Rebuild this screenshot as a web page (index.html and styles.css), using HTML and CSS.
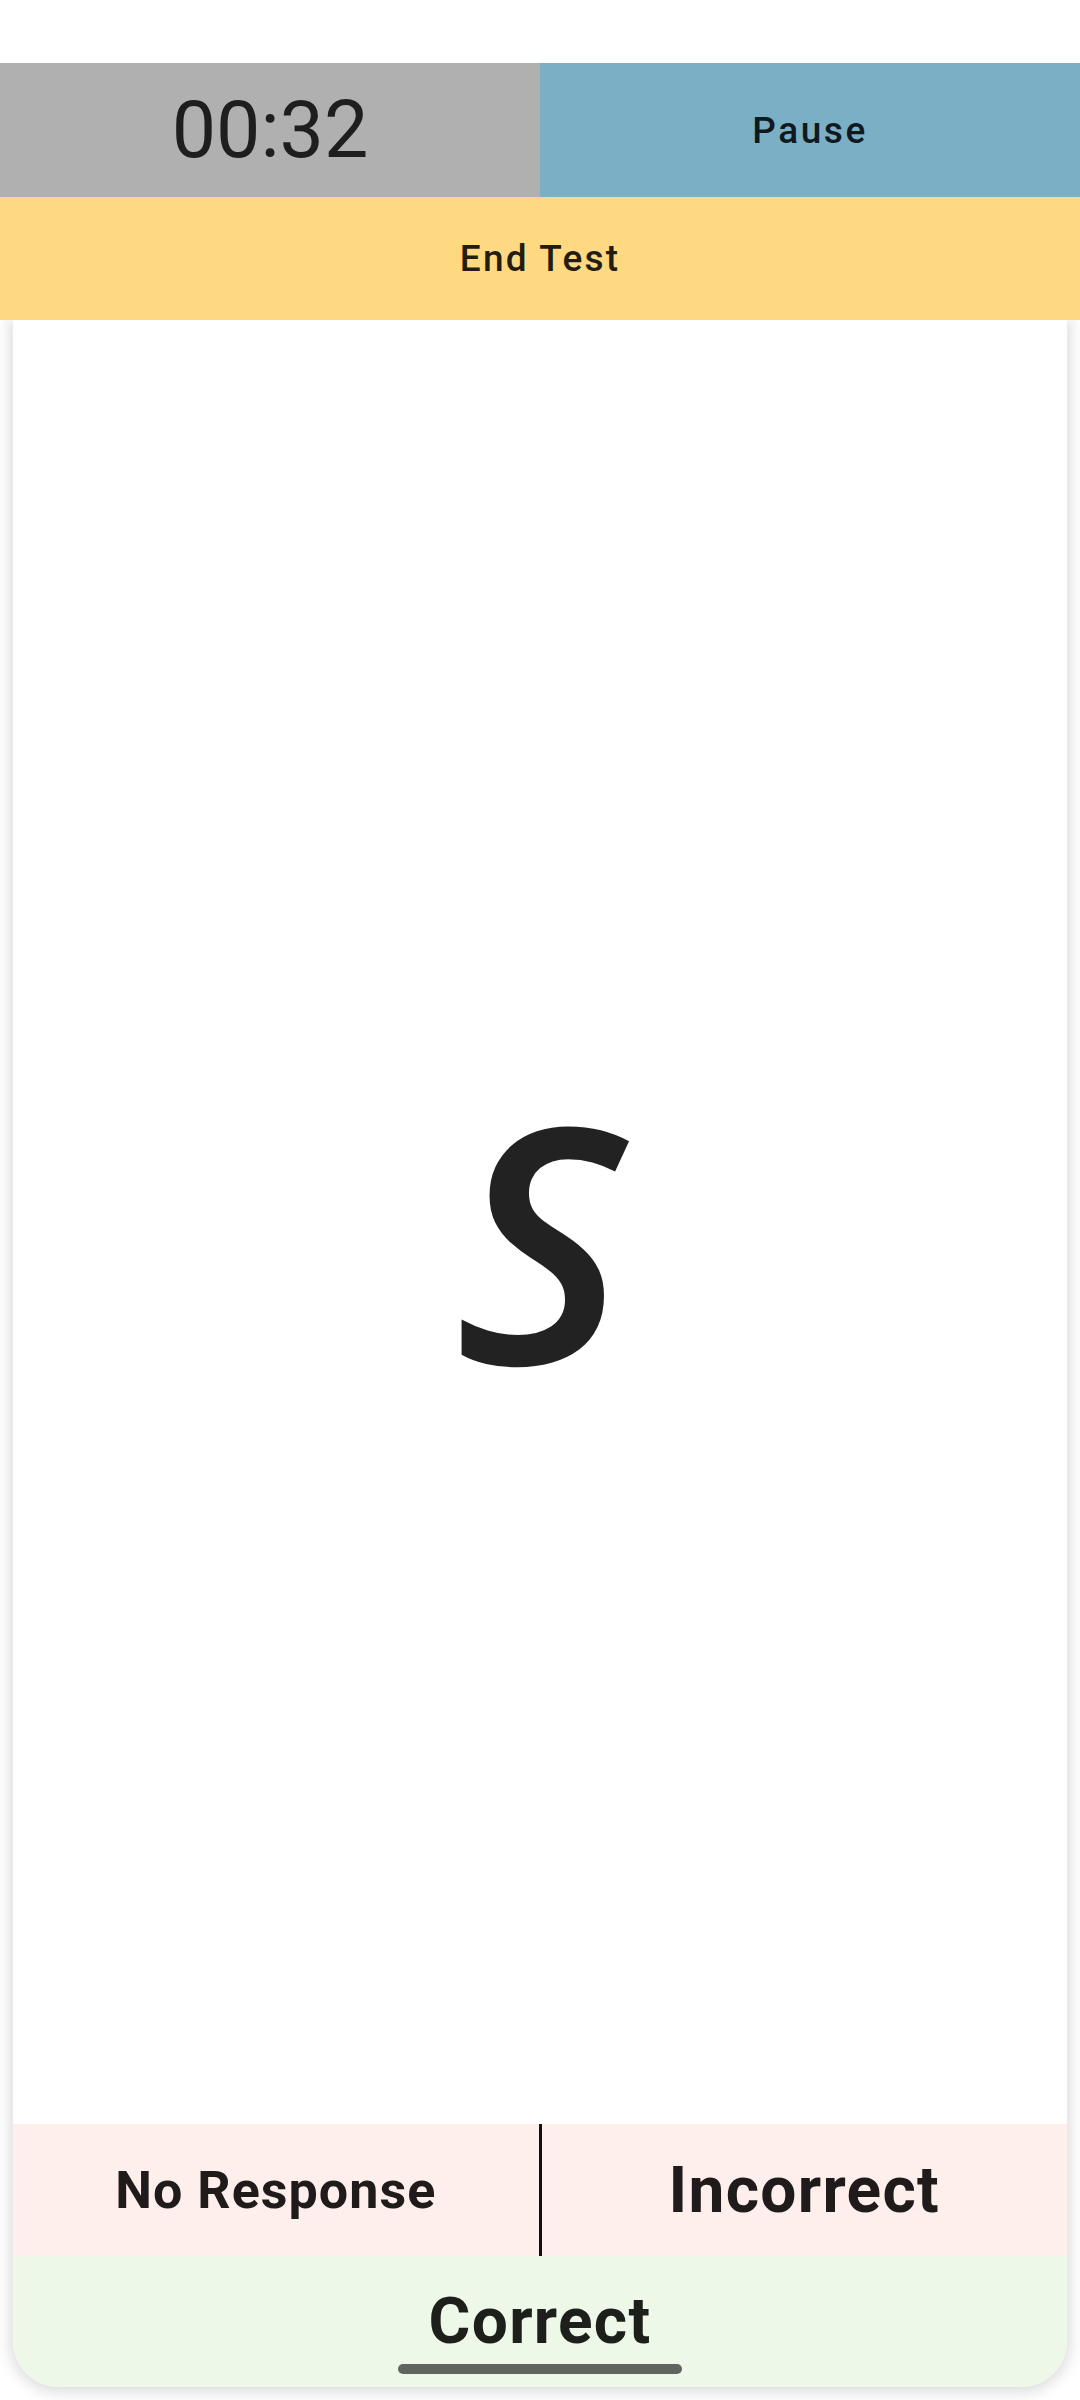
FILE: index.html
```html
<!DOCTYPE html>
<html lang="en">
<head>
<meta charset="utf-8">
<title>Test</title>
<link rel="stylesheet" href="styles.css">
</head>
<body>
<div class="screen">
  <div class="status-space"></div>
  <div class="top-row">
    <div class="timer">00:32</div>
    <div class="pause">Pause</div>
  </div>
  <div class="end-test">End Test</div>
  <div class="card">
    <div class="stage"><span class="letter">S</span></div>
    <div class="answer-row">
      <div class="answer no-response">No Response</div>
      <div class="divider"></div>
      <div class="answer incorrect">Incorrect</div>
    </div>
    <div class="correct">Correct</div>
  </div>
  <div class="home-indicator"></div>
</div>
</body>
</html>
```

FILE: styles.css
```css
html, body {
  margin: 0;
  padding: 0;
  background: #ffffff;
}

.screen {
  position: relative;
  width: 1080px;
  height: 2400px;
  display: flex;
  flex-direction: column;
  overflow: hidden;
  font-family: Roboto, "Noto Sans", sans-serif;
  color: #1d1b1c;
}

.status-space {
  height: 63px;
  flex: none;
  background: #ffffff;
}

.top-row {
  height: 134px;
  flex: none;
  display: flex;
  position: relative;
  z-index: 2;
}

.timer {
  flex: 1;
  background: #b0b0b0;
  display: flex;
  align-items: center;
  justify-content: center;
  font-size: 79px;
  font-weight: 400;
  color: #1e1e1e;
}

.pause {
  flex: 1;
  background: #7bafc6;
  display: flex;
  align-items: center;
  justify-content: center;
  font-size: 37px;
  font-weight: 500;
  letter-spacing: 0.07em;
  color: #0f1a20;
}

.end-test {
  height: 123px;
  flex: none;
  background: #ffd981;
  display: flex;
  align-items: center;
  justify-content: center;
  font-size: 37px;
  font-weight: 500;
  letter-spacing: 0.06em;
  color: #231d10;
  position: relative;
  z-index: 2;
}

.card {
  flex: 1;
  margin: 0 13px 13px;
  background: #ffffff;
  border-radius: 0 0 46px 46px;
  box-shadow: 0 2px 14px 4px rgba(0, 0, 0, 0.13);
  display: flex;
  flex-direction: column;
  overflow: hidden;
  position: relative;
  z-index: 1;
}

.stage {
  flex: 1;
  display: flex;
  align-items: center;
  justify-content: center;
  padding-top: 30px;
}

.letter {
  font-family: "Open Sans", "Noto Sans", sans-serif;
  font-style: italic;
  font-weight: 600;
  font-size: 328px;
  color: #222222;
  line-height: 1;
}

.answer-row {
  height: 132px;
  flex: none;
  display: flex;
  background: #ffefec;
}

.answer {
  flex: 1;
  display: flex;
  align-items: center;
  justify-content: center;
  font-weight: 700;
  letter-spacing: 0.02em;
  color: #1f1b1b;
}

.no-response {
  font-size: 52px;
}

.incorrect {
  font-size: 64px;
}

.divider {
  width: 3px;
  flex: none;
  background: #111111;
}

.correct {
  height: 131px;
  flex: none;
  background: #eef8e8;
  display: flex;
  align-items: center;
  justify-content: center;
  font-size: 64px;
  font-weight: 700;
  letter-spacing: 0.02em;
  color: #1d1f1b;
}

.home-indicator {
  position: absolute;
  left: 398px;
  top: 2364px;
  width: 284px;
  height: 10px;
  border-radius: 5px;
  background: #5f6560;
  z-index: 3;
}
```
